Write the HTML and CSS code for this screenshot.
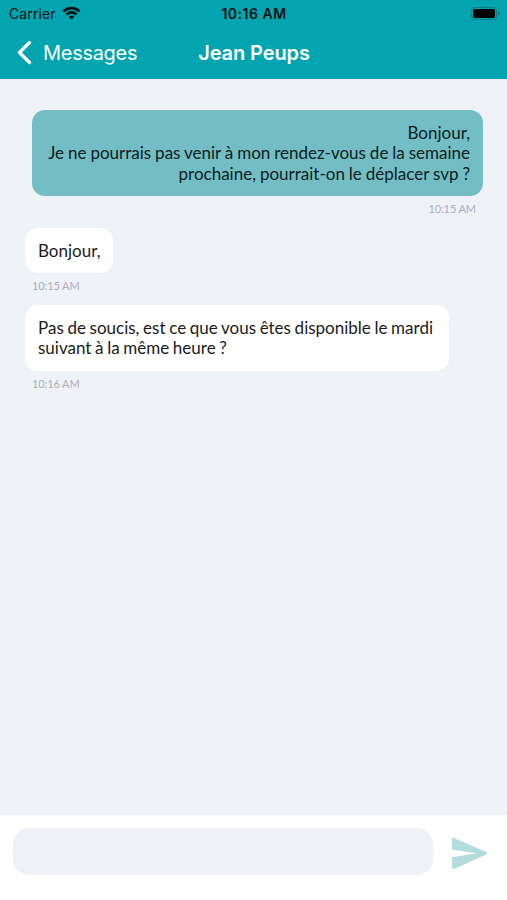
FILE: index.html
```html
<!DOCTYPE html>
<html lang="fr">
<head>
<meta charset="utf-8">
<title>Jean Peups</title>
<link rel="stylesheet" href="styles.css">
</head>
<body>
<div class="screen">
  <header class="header">
    <div class="status">
      <div class="carrier"><span class="carrier-name">Carrier</span>
        <svg class="wifi" width="19" height="14" viewBox="0 0 20 14" fill="none" stroke="#031315" stroke-width="2.900"><path d="M1.600 5.300a12 12 0 0 1 16.800 0"/><path d="M4.700 8.600a7.600 7.600 0 0 1 10.600 0"/><path d="M10 13.800 7.200 11a4 4 0 0 1 5.600 0z" fill="#031315" stroke="none"/></svg>
      </div>
      <div class="clock">10:16 AM</div>
      <svg class="battery" width="30" height="13" viewBox="0 0 30 13"><rect x=".5" y=".5" width="25" height="12" rx="3" fill="none" stroke="#087c82"/><rect x="2" y="2" width="22" height="9" rx="1.500" fill="#000"/><path d="M27 4.300c2 .5 2 3.900 0 4.400z" fill="#087c82"/></svg>
    </div>
    <nav class="nav">
      <a class="back"><svg width="16" height="24" viewBox="0 0 16 24" fill="none" stroke="#fff" stroke-width="3.200" stroke-linecap="round" stroke-linejoin="round"><path d="M13.500 1.500 3.500 11.500l10 10"/></svg><span class="back-label">Messages</span></a>
      <h1 class="title">Jean Peups</h1>
    </nav>
  </header>
  <main class="thread">
    <div class="message sent">
      <p class="bubble">Bonjour,<br>Je ne pourrais pas venir à mon rendez-vous de la semaine<br>prochaine, pourrait-on le déplacer svp ?</p>
      <time class="time">10:15 AM</time>
    </div>
    <div class="message">
      <p class="bubble">Bonjour,</p>
      <time class="time">10:15 AM</time>
    </div>
    <div class="message">
      <p class="bubble multiline">Pas de soucis, est ce que vous êtes disponible le mardi<br>suivant à la même heure ?</p>
      <time class="time">10:16 AM</time>
    </div>
  </main>
  <footer class="composer">
    <div class="input"></div>
    <svg class="send" width="38" height="33" viewBox="0 0 38 33"><path d="M3 1 35.500 15q1.500 1.200 0 2.400L3 32q-2 .5-2-1.500V20.300L26 16.200 1 12.500V2.300Q1 .3 3 1z" fill="#b2dcde"/></svg>
  </footer>
</div>
</body>
</html>
```
FILE: styles.css
```css
* { box-sizing: border-box; }
body, p, h1 { margin: 0; }
.screen {
  display: flex;
  flex-direction: column;
  height: 900px;
  background: #eff3f8;
  font-family: Lato, sans-serif;
}
.header {
  height: 79px;
  background: #02a5af;
  font-family: Inter, sans-serif;
}
.status {
  display: grid;
  grid-template-columns: 1fr auto 1fr;
  align-items: center;
  height: 27px;
  padding: 0 6px 0 9px;
  color: #031315;
}
.carrier { display: flex; align-items: center; gap: 6px; }
.carrier-name { font-size: 14px; letter-spacing: .1px; }
.wifi { margin-top: -2px; }
.clock { margin-right: 2px; font-size: 14px; font-weight: 600; letter-spacing: .5px; }
.battery { justify-self: end; }
.nav {
  display: grid;
  grid-template-columns: 1fr auto 1fr;
  align-items: center;
  height: 51px;
  padding: 0 15px 0 16px;
  color: #fff;
}
.back { display: flex; align-items: center; gap: 11px; }
.back-label { font-size: 20px; letter-spacing: -.3px; }
.title { font-size: 20px; font-weight: 600; letter-spacing: -.1px; }
.thread {
  flex: 1;
  display: flex;
  flex-direction: column;
  gap: 12px;
  padding: 31px 24px 0 25px;
}
.message { display: flex; flex-direction: column; align-items: flex-start; }
.bubble {
  padding: 13px 12px 11.6px 13px;
  border-radius: 13px;
  background: #fff;
  color: #1b1b1d;
  font-size: 17px;
  line-height: 20.4px;
  word-spacing: -.7px;
  white-space: nowrap;
}
.multiline { padding: 13px 16px 12.200px 13px; }
.time {
  margin: 6px 7px 0;
  color: #abaeb9;
  font-size: 11px;
  line-height: 14px;
  letter-spacing: -.1px;
}
.sent { align-items: flex-end; }
.sent .bubble {
  padding: 13px 13px 11.800px 16px;
  background: #72bec4;
  color: #0b1c20;
  text-align: right;
  word-spacing: -.42px;
}
.composer {
  display: flex;
  align-items: flex-start;
  height: 85px;
  padding: 13px 18px 0 13px;
  background: #fff;
}
.input {
  width: 420px;
  height: 47px;
  border-radius: 16px;
  background: #eff1f6;
}
.send { margin: 9px 0 0 18px; }
```
